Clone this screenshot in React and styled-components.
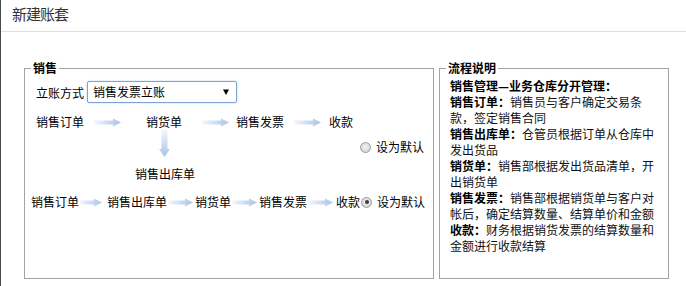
import React, { useId } from "react";
import styled, { createGlobalStyle } from "styled-components";

const GlobalStyle = createGlobalStyle`
  html, body {
    margin: 0;
    padding: 0;
    background: #fff;
  }
  body {
    font-family: "Noto Sans CJK SC", "Liberation Sans", sans-serif;
    font-size: 12px;
    color: #000;
  }
`;

const notes = [
  { term: "销售订单：", text: "销售员与客户确定交易条款，签定销售合同" },
  { term: "销售出库单：", text: "仓管员根据订单从仓库中发出货品" },
  { term: "销货单：", text: "销售部根据发出货品清单，开出销货单" },
  { term: "销售发票：", text: "销售部根据销货单与客户对帐后，确定结算数量、结算单价和金额" },
  { term: "收款：", text: "财务根据销货发票的结算数量和金额进行收款结算" },
];

function HArrow({ width, before }) {
  const id = useId();
  return (
    <ArrowSvg $before={before} width={width} height="9" viewBox={`0 0 ${width} 9`}>
      <defs>
        <linearGradient id={id} x1="0" x2="1" y1="0" y2="0">
          <stop offset="0" stopColor="#f3f7fc" />
          <stop offset="1" stopColor="#a8c3e6" />
        </linearGradient>
      </defs>
      <path
        d={`M0 2.5H${width - 8}V0.5L${width} 4.5L${width - 8} 8.5V6.5H0Z`}
        fill={`url(#${id})`}
      />
    </ArrowSvg>
  );
}

function VArrow() {
  const id = useId();
  return (
    <DownSvg width="11" height="27" viewBox="0 0 11 27">
      <defs>
        <linearGradient id={id} x1="0" x2="0" y1="0" y2="1">
          <stop offset="0" stopColor="#f3f7fc" />
          <stop offset="1" stopColor="#a8c3e6" />
        </linearGradient>
      </defs>
      <path d="M2.5 0H8.5V19H11L5.5 27L0 19H2.5Z" fill={`url(#${id})`} />
    </DownSvg>
  );
}

function App() {
  return (
    <Page>
      <GlobalStyle />
      <Header>
        <Title>新建账套</Title>
      </Header>
      <Body>
        <FlowSet>
          <Legend>销售</Legend>
          <SetupRow>
            <span>立账方式</span>
            <SelectBox>
              <span>销售发票立账</span>
              <svg width="6" height="6" viewBox="0 0 6 6">
                <path d="M0 0.5H6L3 6Z" fill="#000" />
              </svg>
            </SelectBox>
          </SetupRow>

          <FlowRow $top={11} $indent={5}>
            <Step>销售订单</Step>
            <HArrow width={27} before={10} />
            <Step $before={25}>销货单</Step>
            <HArrow width={27} before={20} />
            <Step $before={7}>销售发票</Step>
            <HArrow width={27} before={10} />
            <Step $before={8}>收款</Step>
          </FlowRow>

          <Branch>
            <VArrow />
            <RadioOption>
              <Radio />
              <span>设为默认</span>
            </RadioOption>
          </Branch>
          <OutLabel>销售出库单</OutLabel>

          <FlowRow $top={12} $indent={0}>
            <Step>销售订单</Step>
            <HArrow width={22} before={1} />
            <Step $before={5}>销售出库单</Step>
            <HArrow width={25} before={1} />
            <Step $before={2}>销货单</Step>
            <HArrow width={25} before={1} />
            <Step $before={2}>销售发票</Step>
            <HArrow width={25} before={1} />
            <Step $before={3}>收款</Step>
            <RadioOption $inline>
              <Radio $checked />
              <span>设为默认</span>
            </RadioOption>
          </FlowRow>
        </FlowSet>

        <NoteSet>
          <Legend>流程说明</Legend>
          <Notes>
            <Lead>销售管理—业务仓库分开管理：</Lead>
            {notes.map((n) => (
              <Note key={n.term}>
                <Term>{n.term}</Term>
                {n.text}
              </Note>
            ))}
          </Notes>
        </NoteSet>
      </Body>
    </Page>
  );
}

const Page = styled.div`
  width: 686px;
  height: 286px;
  box-sizing: border-box;
  border-left: 1px solid #4b4b4b;
  overflow: hidden;
`;

const Header = styled.div`
  height: 28px;
  padding: 0 0 3px 11px;
  border-bottom: 1px solid #dedede;
  display: flex;
  align-items: center;
`;

const Title = styled.div`
  font-size: 15px;
  line-height: 28px;
  letter-spacing: -1px;
  color: #333;
`;

const Body = styled.div`
  display: flex;
  gap: 5px;
  padding: 29px 0 0 23px;
`;

const Fieldset = styled.fieldset`
  margin: 0;
  min-width: 0;
  height: 218px;
  box-sizing: border-box;
  border: 1px solid #a3a3a3;
`;

const FlowSet = styled(Fieldset)`
  width: 410px;
  padding: 6px 9px 0 6px;
`;

const NoteSet = styled(Fieldset)`
  width: 230px;
  padding: 3px 0 0 6px;
`;

const Legend = styled.legend`
  padding: 0 2px;
  font-size: 12px;
  line-height: 14px;
  font-weight: bold;
  color: #000;
`;

const SetupRow = styled.div`
  display: flex;
  align-items: center;
  gap: 3px;
  height: 22px;
  padding-left: 5px;
`;

const SelectBox = styled.div`
  width: 150px;
  height: 22px;
  box-sizing: border-box;
  padding: 0 7px 0 5px;
  border: 1px solid #7ea3d4;
  border-radius: 2px;
  box-shadow: 0 0 2px rgba(110, 160, 225, 0.55);
  display: flex;
  align-items: center;
  justify-content: space-between;
  line-height: 20px;
`;

const FlowRow = styled.div`
  display: flex;
  align-items: center;
  height: 16px;
  margin-top: ${(p) => p.$top}px;
  padding-left: ${(p) => p.$indent}px;
  white-space: nowrap;
`;

const Step = styled.span`
  margin-left: ${(p) => p.$before || 0}px;
  line-height: 16px;
`;

const ArrowSvg = styled.svg`
  display: block;
  flex: none;
  margin-left: ${(p) => p.$before || 0}px;
`;

const DownSvg = styled.svg`
  display: block;
  flex: none;
  margin-left: 128px;
`;

const Branch = styled.div`
  display: flex;
  align-items: flex-start;
  height: 36px;
`;

const RadioOption = styled.label`
  display: flex;
  align-items: center;
  gap: 5px;
  height: 14px;
  margin-left: ${(p) => (p.$inline ? "1px" : "auto")};
  margin-top: ${(p) => (p.$inline ? 0 : "10px")};
  line-height: 14px;
`;

const Radio = styled.span`
  width: 11px;
  height: 11px;
  box-sizing: border-box;
  border-radius: 50%;
  border: 1px solid #9b9b9b;
  background: radial-gradient(circle at 50% 45%, #f4f4f4 0%, #dcdcdc 60%, #c8c8c8 100%);
  position: relative;
  flex: none;

  &::after {
    content: "";
    display: ${(p) => (p.$checked ? "block" : "none")};
    position: absolute;
    left: 2.5px;
    top: 2.5px;
    width: 4px;
    height: 4px;
    border-radius: 50%;
    background: #3c3c3c;
  }
`;

const OutLabel = styled.div`
  margin-left: 104px;
  line-height: 16px;
  height: 16px;
`;

const Notes = styled.div`
  width: 206px;
  padding-left: 4px;
  line-height: 16px;
  color: #111;
`;

const Lead = styled.div`
  font-weight: bold;
  color: #000;
`;

const Note = styled.div``;

const Term = styled.b`
  font-weight: bold;
  color: #000;
`;

export default App;
